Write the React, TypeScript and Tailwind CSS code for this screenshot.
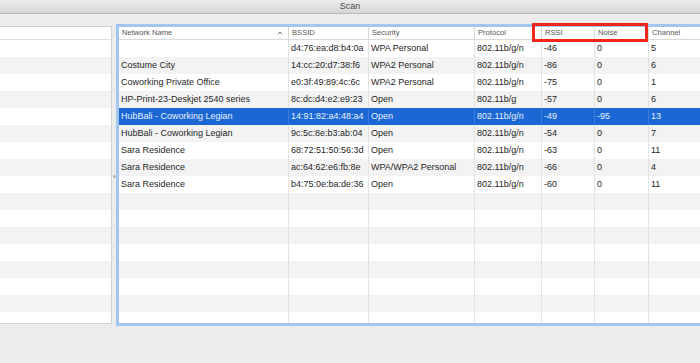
import { ReactNode } from 'react';

interface Network {
    name: string;
    bssid: string;
    security: string;
    protocol: string;
    rssi: string;
    noise: string;
    channel: string;
}

const networks: Network[] = [
    { name: '', bssid: 'd4:76:ea:d8:b4:0a', security: 'WPA Personal', protocol: '802.11b/g/n', rssi: '-46', noise: '0', channel: '5' },
    { name: 'Costume City', bssid: '14:cc:20:d7:38:f6', security: 'WPA2 Personal', protocol: '802.11b/g/n', rssi: '-86', noise: '0', channel: '6' },
    { name: 'Coworking Private Office', bssid: 'e0:3f:49:89:4c:6c', security: 'WPA2 Personal', protocol: '802.11b/g/n', rssi: '-75', noise: '0', channel: '1' },
    { name: 'HP-Print-23-Deskjet 2540 series', bssid: '8c:dc:d4:e2:e9:23', security: 'Open', protocol: '802.11b/g', rssi: '-57', noise: '0', channel: '6' },
    { name: 'HubBali - Coworking Legian', bssid: '14:91:82:a4:48:a4', security: 'Open', protocol: '802.11b/g/n', rssi: '-49', noise: '-95', channel: '13' },
    { name: 'HubBali - Coworking Legian', bssid: '9c:5c:8e:b3:ab:04', security: 'Open', protocol: '802.11b/g/n', rssi: '-54', noise: '0', channel: '7' },
    { name: 'Sara Residence', bssid: '68:72:51:50:56:3d', security: 'Open', protocol: '802.11b/g/n', rssi: '-63', noise: '0', channel: '11' },
    { name: 'Sara Residence', bssid: 'ac:64:62:e6:fb:8e', security: 'WPA/WPA2 Personal', protocol: '802.11b/g/n', rssi: '-66', noise: '0', channel: '4' },
    { name: 'Sara Residence', bssid: 'b4:75:0e:ba:de:36', security: 'Open', protocol: '802.11b/g/n', rssi: '-60', noise: '0', channel: '11' },
];

const SELECTED = 4;
const ROWS = 17;

// column widths include the 1px separator on the right
const widths = ['w-[170px]', 'w-[80px]', 'w-[106px]', 'w-[67px]', 'w-[53px]', 'w-[54px]', 'flex-1'];

function Cell({ i, children, selected }: { i: number; children?: ReactNode; selected?: boolean }) {
    return (
        <div className={`${widths[i]} shrink-0 h-full pl-[2px] truncate border-r ${selected ? 'border-[#3a7ddc]' : 'border-[#e2e2e2]'}`}>
            {children}
        </div>
    );
}

function HeaderCell({ i, children }: { i: number; children?: ReactNode }) {
    return (
        <div className={`${widths[i]} shrink-0 h-full pl-[3px] pr-[4px] flex items-center border-r border-[#d9d9d9]`}>
            {children}
        </div>
    );
}

export default function App() {
    const rows = Array.from({ length: ROWS }, (_, k) => networks[k]);

    return (
        <div className="w-[700px] h-[363px] bg-[#ececec] overflow-hidden relative font-['Liberation_Sans',Arial,sans-serif]">
            {/* title bar */}
            <div className="h-[14px] bg-gradient-to-b from-[#ececec] to-[#d6d6d6] border-b border-[#b8b8b8] flex items-center justify-center">
                <span className="text-[9px] leading-none text-[#4a4a4a]">Scan</span>
            </div>

            <div className="flex items-start">
                {/* sidebar list */}
                <div className="w-[112px] shrink-0 mt-[12px] h-[298px] bg-white border-t border-b border-r border-[#d2d2d2] overflow-hidden">
                    <div className="h-[13px] border-b border-[#dedede]" />
                    {Array.from({ length: ROWS }, (_, k) => (
                        <div key={k} className={`h-[17px] ${k % 2 === 1 ? 'bg-[#f3f3f3]' : 'bg-white'}`} />
                    ))}
                </div>

                {/* splitter */}
                <div className="w-[4px] shrink-0 h-[300px] mt-[12px] flex items-center justify-center">
                    <div className="w-[3px] h-[3px] rounded-full bg-[#b4b4b4]" />
                </div>

                {/* network table with focus ring */}
                <div className="w-[600px] shrink-0 mt-[10px] h-[302px] border-[3px] border-[#a3c6f0] bg-white overflow-hidden">
                    <div className="h-[13px] flex border-b border-[#d9d9d9] text-[7.6px] text-[#555]">
                        <HeaderCell i={0}>
                            <span className="flex-1">Network Name</span>
                            <svg width="6" height="4" viewBox="0 0 6 4" className="mr-[1px]">
                                <path d="M0.8 3.4 L3 1 L5.2 3.4" fill="none" stroke="#666" strokeWidth="0.9" />
                            </svg>
                        </HeaderCell>
                        <HeaderCell i={1}>BSSID</HeaderCell>
                        <HeaderCell i={2}>Security</HeaderCell>
                        <HeaderCell i={3}>Protocol</HeaderCell>
                        <HeaderCell i={4}>RSSI</HeaderCell>
                        <HeaderCell i={5}>Noise</HeaderCell>
                        <HeaderCell i={6}>Channel</HeaderCell>
                    </div>
                    {rows.map((n, k) => {
                        const selected = k === SELECTED;
                        const bg = selected ? 'bg-[#1b68d5] text-[#e8f0fc]' : k % 2 === 1 ? 'bg-[#f3f3f3] text-[#262626]' : 'bg-white text-[#262626]';
                        return (
                            <div key={k} className={`h-[17px] flex text-[9px] leading-[17px] ${bg}`}>
                                <Cell i={0} selected={selected}>{n?.name}</Cell>
                                <Cell i={1} selected={selected}>{n?.bssid}</Cell>
                                <Cell i={2} selected={selected}>{n?.security}</Cell>
                                <Cell i={3} selected={selected}>{n?.protocol}</Cell>
                                <Cell i={4} selected={selected}>{n?.rssi}</Cell>
                                <Cell i={5} selected={selected}>{n?.noise}</Cell>
                                <Cell i={6} selected={selected}>{n?.channel}</Cell>
                            </div>
                        );
                    })}
                </div>
            </div>

            {/* red highlight annotation around RSSI / Noise */}
            <div className="absolute left-[532px] top-[23px] w-[116px] h-[19px] border-[3px] border-[#f2261b]" />
        </div>
    );
}
